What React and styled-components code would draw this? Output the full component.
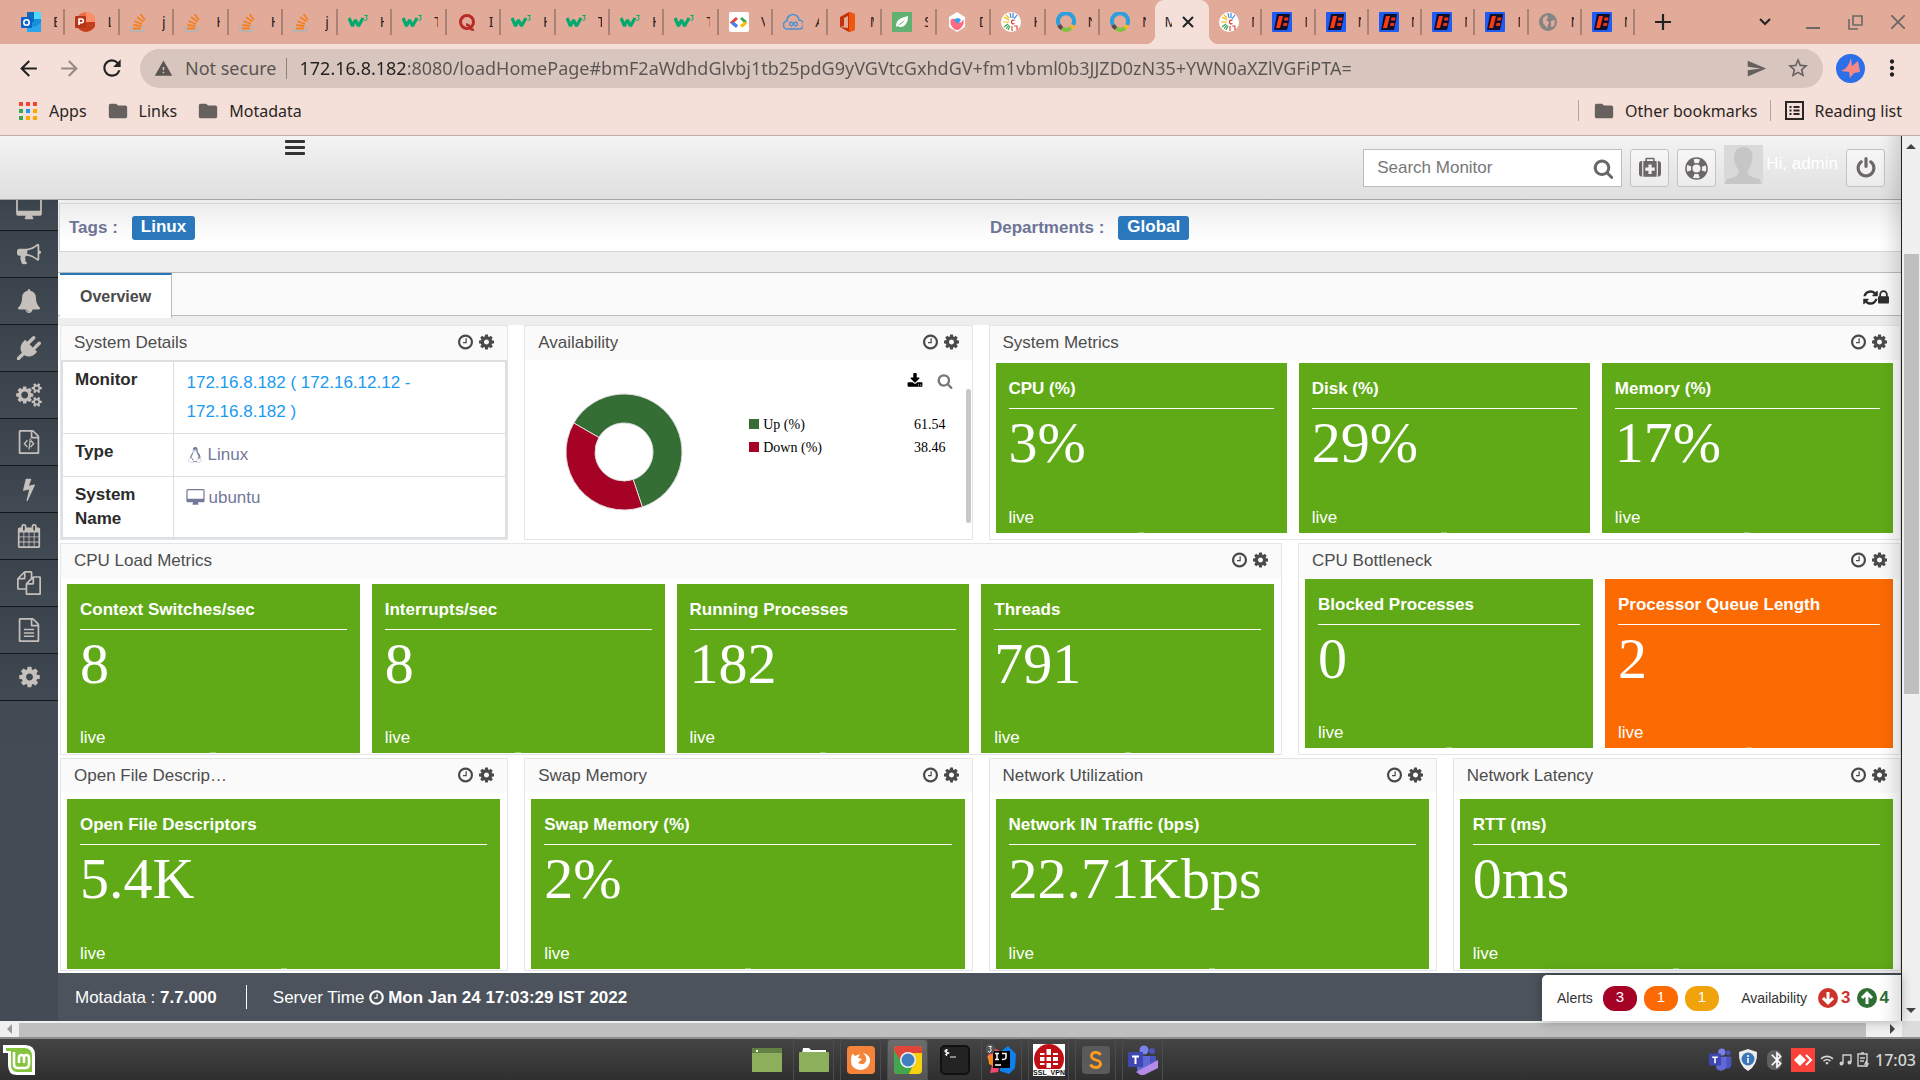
import React from "react";
import styled, { createGlobalStyle, css } from "styled-components";
import { FaLinux } from "react-icons/fa";
import { MdArrowBack, MdArrowForward, MdRefresh, MdSend, MdStarBorder, MdMoreVert, MdWarning, MdFolder, MdBluetooth, MdWifi } from "react-icons/md";

const sans = '"Liberation Sans", Arial, sans-serif';
const serif = '"Liberation Serif", "Times New Roman", serif';
const noto = '"Noto Sans", "Open Sans", sans-serif';

const Global = createGlobalStyle`
  * { box-sizing: border-box; }
  body { margin: 0; overflow: hidden; font-family: ${sans}; font-size: 17px; line-height: 24px; color: #333; }
  button { border: 0; padding: 0; margin: 0; background: none; color: inherit; font: inherit; cursor: pointer; }
  a { color: inherit; text-decoration: none; }
  svg { display: block; flex: none; }
`;

/* ---------- glyphs ---------- */

const page = "M1596 380q28 28 48 76t20 88v1152q0 40-28 68t-68 28h-1344q-40 0-68-28t-28-68v-1600q0-40 28-68t68-28h896q40 0 88 20t76 48zm-444-244v376h376q-10-29-22-41l-313-313q-12-12-41-22zm384 1528v-1024h-416q-40 0-68-28t-28-68v-416h-768v1536h1280z";
const smallCog = "v140q0 16-149 31-12 27-30 52 51 113 51 138 0 4-4 7-122 71-124 71-8 0-46-47t-52-68q-20 2-30 2t-30-2q-14 21-52 68t-46 47q-2 0-124-71-4-3-4-7 0-25 51-138-18-25-30-52-149-15-149-31v-140q0-16 149-31 13-29 30-52-51-113-51-138 0-4 4-7 4-2 35-20t59-34 30-16q8 0 46 46.500t52 67.500q20-2 30-2t30 2q51-71 92-112l6-2q4 0 124 70 4 3 4 7 0 25-51 138 17 23 30 52 149 15 149 31z";
const glyphs = {
  cog: "M1152 896q0-106-75-181t-181-75-181 75-75 181 75 181 181 75 181-75 75-181zm512-109v222q0 12-8 23t-20 13l-185 28q-19 54-39 91 35 50 107 138 10 12 10 25t-9 23q-27 37-99 108t-94 71q-12 0-26-9l-138-108q-44 23-91 38-16 136-29 186-7 28-36 28h-222q-14 0-24.500-8.500t-11.500-21.500l-28-184q-49-16-90-37l-141 107q-10 9-25 9-14 0-25-11-126-114-165-168-7-10-7-23 0-12 8-23 15-21 51-66.500t54-70.500q-27-50-41-99l-183-27q-13-2-21-12.500t-8-23.500v-222q0-12 8-23t19-13l186-28q14-46 39-92-40-57-107-138-10-12-10-24 0-10 9-23 26-36 98.500-107.500t94.500-71.500q13 0 26 10l138 107q44-23 91-38 16-136 29-186 7-28 36-28h222q14 0 24.500 8.500t11.500 21.500l28 184q49 16 90 37l142-107q9-9 24-9 13 0 25 10 129 119 165 170 7 8 7 22 0 12-8 23-15 21-51 66.500t-54 70.500q26 50 41 98l183 28q13 2 21 12.500t8 23.500z",
  clock: "M1024 544v448q0 14-9 23t-23 9h-320q-14 0-23-9t-9-23v-64q0-14 9-23t23-9h224v-352q0-14 9-23t23-9h64q14 0 23 9t9 23zm416 352q0-148-73-273t-198-198-273-73-273 73-198 198-73 273 73 273 198 198 273 73 273-73 198-198 73-273zm224 0q0 209-103 385.500t-279.500 279.500-385.500 103-385.500-103-279.500-279.500-103-385.500 103-385.500 279.500-279.500 385.500-103 385.500 103 279.500 279.500 103 385.500z",
  search: "M1216 832q0-185-131.500-316.500t-316.500-131.500-316.500 131.500-131.500 316.500 131.500 316.500 316.500 131.500 316.500-131.500 131.500-316.500zm512 832q0 52-38 90t-90 38q-54 0-90-38l-343-342q-179 124-399 124-143 0-273.500-55.500t-225-150-150-225-55.500-273.500 55.500-273.500 150-225 225-150 273.500-55.500 273.500 55.500 225 150 150 225 55.500 273.500q0 220-124 399l343 343q37 37 37 90z",
  download: "M1344 1344q0-26-19-45t-45-19-45 19-19 45 19 45 45 19 45-19 19-45zm256 0q0-26-19-45t-45-19-45 19-19 45 19 45 45 19 45-19 19-45zm128-224v320q0 40-28 68t-68 28h-1472q-40 0-68-28t-28-68v-320q0-40 28-68t68-28h465l135 136q58 56 136 56t136-56l136-136h464q40 0 68 28t28 68zm-325-569q17 41-14 70l-448 448q-18 19-45 19t-45-19l-448-448q-31-29-14-70 17-39 59-39h256v-448q0-26 19-45t45-19h256q26 0 45 19t19 45v448h256q42 0 59 39z",
  bell: "M912 1696q0-16-16-16-59 0-101.500-42.500t-42.500-101.500q0-16-16-16t-16 16q0 73 51.500 124.500t124.500 51.500q16 0 16-16zm816-288q0 52-38 90t-90 38h-448q0 106-75 181t-181 75-181-75-75-181h-448q-52 0-90-38t-38-90q50-42 91-88t85-119.500 74.500-158.500 50-206 19.500-260q0-152 117-282.500t307-158.500q-8-19-8-39 0-40 28-68t68-28 68 28 28 68q0 20-8 39 190 28 307 158.500t117 282.500q0 139 19.500 260t50 206 74.500 158.500 85 119.500 91 88z",
  bolt: "M1333 566q18 20 7 44l-540 1157q-13 25-42 25-4 0-14-2-17-5-25.500-19t-4.500-30l197-808-406 101q-4 1-12 1-18 0-31-11-18-15-13-39l201-825q4-14 16-23t28-9h328q19 0 32 12.500t13 29.500q0 8-5 18l-171 463 396-98q8-2 12-2 19 0 34 15z",
  bullhorn: "M1664 640q53 0 90.500 37.500t37.500 90.500-37.500 90.500-90.500 37.500v384q0 52-38 90t-90 38q-417-347-812-380-58 19-91 66t-31 100.500 40 92.500q-20 33-23 65.500t6 58 33.500 55 48 50 61.500 50.500q-29 58-111.500 83t-168.500 11.500-132-55.500q-7-23-29.500-87.500t-32-94.500-23-89-15-101 3.500-98.500 22-110.500h-122q-66 0-113-47t-47-113v-192q0-66 47-113t113-47h480q435 0 896-384 52 0 90 38t38 90v384zm-128 604v-954q-394 302-768 343v270q377 42 768 341z",
  desktop: "M1728 992v-832q0-13-9.500-22.500t-22.500-9.500h-1600q-13 0-22.500 9.500t-9.500 22.500v832q0 13 9.500 22.500t22.500 9.500h1600q13 0 22.500-9.500t9.500-22.500zm128-832v1088q0 66-47 113t-113 47h-544q0 37 16 77.500t32 71 16 43.500q0 26-19 45t-45 19h-512q-26 0-45-19t-19-45q0-14 16-44t32-70 16-78h-544q-66 0-113-47t-47-113v-1088q0-66 47-113t113-47h1600q66 0 113 47t47 113z",
  plug: "M1755 453q37 38 37 90.500t-37 90.500l-401 400 150 150-160 160q-163 163-389.500 186.500t-411.500-100.500l-362 362h-181v-181l362-362q-124-185-100.500-411.500t186.500-389.500l160-160 150 150 400-401q38-37 91-37t90 37 37 90.500-37 90.500l-400 401 234 234 401-400q38-37 91-37t90 37z",
  cogs: "M832 896q0-106-75-181t-181-75-181 75-75 181 75 181 181 75 181-75 75-181zm768 512q0-52-38-90t-90-38-90 38-38 90q0 53 37.500 90.500t90.500 37.500 90.500-37.500 37.500-90.500zm0-1024q0-52-38-90t-90-38-90 38-38 90q0 53 37.500 90.500t90.500 37.500 90.500-37.500 37.500-90.500zm-384 421v185q0 10-7 19.500t-16 10.500l-155 24q-11 35-32 76 34 48 90 115 7 11 7 20 0 12-7 19-23 30-82.500 89.500t-78.500 59.500q-11 0-21-7l-115-90q-37 19-77 31-11 108-23 155-7 24-30 24h-186q-11 0-20-7.500t-10-17.500l-23-153q-34-10-75-31l-118 89q-7 7-20 7-11 0-21-8-144-133-144-160 0-9 7-19 10-14 41-53t47-61q-23-44-35-82l-152-24q-10-1-17-9.500t-7-19.500v-185q0-10 7-19.500t16-10.500l155-24q11-35 32-76-34-48-90-115-7-11-7-20 0-12 7-20 22-30 82-89t79-59q11 0 21 7l115 90q34-18 77-32 11-108 23-154 7-24 30-24h186q11 0 20 7.500t10 17.500l23 153q34 10 75 31l118-89q8-7 20-7 11 0 21 8 144 133 144 160 0 8-7 19-12 16-42 54t-45 60q23 48 34 82l152 23q10 2 17 10.500t7 19.500zm640 533" + smallCog + "m0-1024" + smallCog,
  code: page + "M480 1024l260-290 80 66-200 224 200 224-80 66zM1312 1024l-260-290-80 66 200 224-200 224 80 66zM850 1440l100-800 96 14-100 800z",
  text: page + "M512 800h768v112h-768zM512 1056h768v112h-768zM512 1312h768v112h-768z",
  calendar: "M192 1664h288v-288h-288v288zm352 0h320v-288h-320v288zm-352-352h288v-320h-288v320zm352 0h320v-320h-320v320zm-352-384h288v-288h-288v288zm736 736h320v-288h-320v288zm-384-736h320v-288h-320v288zm768 736h288v-288h-288v288zm-384-352h320v-320h-320v320zm-352-864v-288q0-13-9.500-22.500t-22.500-9.500h-64q-13 0-22.500 9.500t-9.500 22.500v288q0 13 9.500 22.500t22.500 9.500h64q13 0 22.500-9.500t9.500-22.500zm736 864h288v-320h-288v320zm-384-384h320v-288h-320v288zm384 0h288v-288h-288v288zm32-480v-288q0-13-9.500-22.500t-22.500-9.500h-64q-13 0-22.500 9.500t-9.500 22.500v288q0 13 9.500 22.500t22.500 9.500h64q13 0 22.500-9.500t9.500-22.500zm384-64v1280q0 52-38 90t-90 38h-1408q-52 0-90-38t-38-90v-1280q0-52 38-90t90-38h128v-96q0-66 47-113t113-47h64q66 0 113 47t47 113v96h384v-96q0-66 47-113t113-47h64q66 0 113 47t47 113v96h128q52 0 90 38t38 90z",
  files: "M1696 384q40 0 68 28t28 68v1216q0 40-28 68t-68 28h-960q-40 0-68-28t-28-68v-288h-544q-40 0-68-28t-28-68v-672q0-40 20-88t48-76l408-408q28-28 76-48t88-20h416q40 0 68 28t28 68v328q68-40 128-40h416zm-544 213l-299 299h299v-299zm-640-384l-299 299h299v-299zm196 647l316-316v-416h-384v416q0 40-28 68t-68 28h-416v640h512v-256q0-40 20-88t48-76zm956 804v-1152h-384v416q0 40-28 68t-68 28h-416v640h896z",
  power: "M1664 896q0 156-61 298t-164 245-245 164-298 61-298-61-245-164-164-245-61-298q0-182 80.500-343t226.500-270q43-32 95.500-25t83.500 50q32 42 24.500 94.500t-49.500 84.500q-98 74-151.500 181t-53.500 228q0 104 40.500 198.500t109.500 163.500 163.500 109.500 198.500 40.500 198.500-40.500 163.500-109.500 109.500-163.500 40.500-198.500q0-121-53.500-228t-151.500-181q-42-32-49.500-84.500t24.500-94.500q31-43 84-50t95 25q146 109 226.500 270t80.500 343zm-640-768v640q0 52-38 90t-90 38-90-38-38-90v-640q0-52 38-90t90-38 90 38 38 90z",
  lock: "M640 768h512v-192q0-106-75-181t-181-75-181 75-75 181v192zm832 96v576q0 40-28 68t-68 28h-960q-40 0-68-28t-28-68v-576q0-40 28-68t68-28h32v-192q0-184 132-316t316-132 316 132 132 316v192h32q40 0 68 28t28 68z",
  refresh: "M1639 1056q0 5-1 7-64 268-268 434.500t-478 166.500q-146 0-282.500-55t-243.500-157l-129 129q-19 19-45 19t-45-19-19-45v-448q0-26 19-45t45-19h448q26 0 45 19t19 45-19 45l-137 137q71 66 161 102t187 36q134 0 250-65t186-179q11-17 53-117 8-23 30-23h192q13 0 22.500 9.500t9.500 22.500zm25-800v448q0 26-19 45t-45 19h-448q-26 0-45-19t-19-45 19-45l138-138q-148-137-349-137-134 0-250 65t-186 179q-11 17-53 117-8 23-30 23h-199q-13 0-22.500-9.500t-9.500-22.500v-7q65-268 270-434.500t480-166.500q146 0 284 55.500t245 156.500l130-129q19-19 45-19t45 19 19 45z",
  medkit: "M0 544q0-92 66-158t158-66h32v1280h-32q-92 0-158-66t-66-158zM1792 544q0-92-66-158t-158-66h-32v1280h32q92 0 158-66t66-158zM352 320h160v-160q0-40 28-68t68-28h576q40 0 68 28t28 68v160h160v1280h-1088zM640 192v128h512v-128zM1280 864h-256v-256h-256v256h-256v256h256v256h256v-256h256z",
};
/* narrow drawings: left edge and width of their own box */
const boxes = { lock: [320, 1152], clock: [128, 1536], cog: [128, 1536], refresh: [128, 1536] };

const Glyph = ({ name, size = 17 }) => {
  const [left, width] = boxes[name] || [0, 1792];
  return (
    <svg width={Math.round((size * width) / 1792)} height={size} viewBox={`${left} 0 ${width} 1792`} fill="currentColor" overflow="visible" aria-hidden="true">
      <path fillRule={name === "medkit" ? "evenodd" : "nonzero"} d={glyphs[name]} />
    </svg>
  );
};

const LifeRing = () => (
  <svg width="23" height="23" viewBox="0 0 24 24" fill="none" stroke="currentColor" aria-hidden="true">
    <circle cx="12" cy="12" r="11" strokeWidth="1.600" />
    <circle cx="12" cy="12" r="5" strokeWidth="1.600" />
    <circle cx="12" cy="12" r="8" strokeWidth="6" strokeDasharray="7 5.566" strokeDashoffset="-2.780" />
  </svg>
);

const ArrowBall = ({ up }) => (
  <svg width="20" height="20" viewBox="0 0 20 20" aria-hidden="true">
    <circle cx="10" cy="10" r="10" fill="currentColor" />
    <path d={up ? "M10 16V5M5 10l5-5 5 5" : "M10 4v11M5 10l5 5 5-5"} fill="none" stroke="#fff" strokeWidth="3" />
  </svg>
);

/* ---------- favicons ---------- */

const favs = {
  outlook: <><rect x="6" y="0" width="14" height="20" rx="1" fill="#1490df" /><path d="M6 0h7v10H6z" fill="#0f6cbd" /><path d="M13 0h7v7h-7z" fill="#50d9ff" /><path d="M6 11l7 4 7-4v9H6z" fill="#28a8ea" /><rect x="0" y="5" width="11" height="11" rx="1" fill="#0a63c9" /><circle cx="5.500" cy="10.500" r="2.700" fill="none" stroke="#fff" strokeWidth="1.600" /></>,
  ppt: <><circle cx="11" cy="10" r="10" fill="#ed6c47" /><path d="M11 0a10 10 0 0 1 10 10H11z" fill="#ff8f6b" /><path d="M2 14a10 10 0 0 0 19-4H11z" fill="#c43e1c" /><rect x="0" y="4" width="11" height="12" rx="1" fill="#b7361a" /><path d="M4 13V7h2.500a1.800 1.800 0 0 1 0 3.700H4" fill="none" stroke="#fff" strokeWidth="1.600" /></>,
  stack: <><path d="M1 14v5h12v-5" fill="none" stroke="#b8b3ae" strokeWidth="2" /><path d="M3 16.500h8M3.300 13l8 1M4.500 9.200l7.600 2.800M7 5l6.500 4.800M10.500 2l4.500 6" stroke="#f48024" strokeWidth="1.800" /></>,
  w3: <><path d="M1 6l3.500 8 3-6 3 6L15 6" fill="none" stroke="#04aa6d" strokeWidth="3.200" strokeLinejoin="bevel" /><path d="M16.500 3.500h3l-1.500 2q2 .5 1 2t-2.500.5" fill="none" stroke="#04aa6d" strokeWidth="1" /></>,
  quora: <><circle cx="10" cy="10" r="6.500" fill="none" stroke="#b92b27" strokeWidth="3" /><path d="M9 12.500q3 0 4 3t4 2" fill="none" stroke="#b92b27" strokeWidth="2.300" /></>,
  code: <><rect width="20" height="20" rx="2" fill="#fff" /><path d="M8 6l-5 4.500 5 4" fill="none" stroke="#ea4335" strokeWidth="3" /><path d="M3 10.500l5 4" stroke="#4285f4" strokeWidth="3" /><path d="M12 6l5 4.500" stroke="#34a853" strokeWidth="3" /><path d="M17 10.500l-5 4" stroke="#fbbc04" strokeWidth="3" /></>,
  cloud: <><path d="M5 17a4 4 0 0 1-1-8 6 6 0 0 1 12-1 4.500 4.500 0 0 1 0 9z" fill="none" stroke="#4a8fd8" strokeWidth="1.600" /><path d="M10.500 12q-2.500-4-4 0 1.500 4 4 0t4 0q-1.500 4-4 0" fill="none" stroke="#4a8fd8" strokeWidth="1.400" /></>,
  office: <><path d="M2 5l9-5 6 2v16l-6 2-9-5 8 1V4L6 6v8l-4 1z" fill="#c4300c" /><path d="M11 0l6 2v16l-6 2z" fill="#f0560d" /></>,
  leaf: <><rect width="20" height="20" fill="#62b072" /><path d="M4 15c0-8 5-9 12-11 0 8-4 13-11 10 3-1 6-3 8-6-3 2-6 4-9 7z" fill="#fff" /></>,
  hexagon: <><path d="M10 0l8 5v10l-8 5-8-5V5z" fill="#fff" /><path d="M3.500 8q4-3 7 1t6-2v5q-3 6-6.500 6T3.500 12z" fill="#ff6b81" /><path d="M7 8q4-4 7 0l-3 4z" fill="#36a2eb" /></>,
  rays: <><circle cx="10" cy="10" r="10" fill="#fff" /><path d="M8 8L3 5M8 10H2M8 6L5 3" stroke="#f2b705" strokeWidth="1.200" /><path d="M10 6L9 1M12 6V1M13 7l3-4" stroke="#3b82e0" strokeWidth="1.200" /><path d="M7 12l-4 3M9 14l-2 4M8 13l-3 4" stroke="#2fa84f" strokeWidth="1.200" /><path d="M11 14v5M13 14h3v4" stroke="#e54b3c" strokeWidth="1.200" fill="none" /><path d="M13.500 8.500q-3-1-3 1.500t3 1.500" stroke="#d33" strokeWidth="1.200" fill="none" /></>,
  ring: <g fill="none" strokeWidth="4"><path d="M3 13a8 8 0 1 1 14 0" stroke="#2d9fdc" /><path d="M17 13q-.500 2-2 3.500" stroke="#f5b81c" /><path d="M15 16q-4 3.500-9 .500" stroke="#7fc142" /><path d="M6 16.500Q4 15 3 13" stroke="#5a4a4a" /></g>,
  b: <><rect width="20" height="20" rx="1" fill="#1f5cf5" /><path d="M2 18L5 2h13l-1 7-2 9z" fill="#10102c" /><path d="M4 16L7 4h4L8 16z" fill="#ff3a12" /><path d="M12.500 5.500h4l-.500 3h-4zM11.500 11h4l-.500 3h-4z" fill="#f0320f" /></>,
  globe: <><circle cx="9" cy="10" r="9" fill="#858585" /><path d="M4 6l4-3 1 3-2 2 3 2-2 6-4-5zM12 9l4-1-1 6-3 1z" fill="#e2ab99" /></>,
};
const Favicon = ({ kind }) => <svg width="20" height="20" viewBox="0 0 20 20" aria-hidden="true">{favs[kind]}</svg>;

/* ---------- browser chrome ---------- */

const Desktop = styled.div`display: flex; flex-direction: column; height: 100vh; overflow: hidden; background: #fff;`;
const TabStrip = styled.div`
  display: flex; align-items: stretch; height: 44px; padding-left: 11px; background: #e2ab99; font: 14px/20px ${noto}; color: #2b211e;
`;
const TabGroup = styled.div`display: flex; flex: 0 1 ${(p) => p.$basis}px; min-width: 0;`;
const BrowserTab = styled.button`
  display: flex; align-items: center; gap: 12px; flex: 1; min-width: 0; padding: 0 0 0 10px; position: relative;
  &::after { content: ""; position: absolute; right: 0; top: 9px; width: 2px; height: 26px; background: ${(p) => (p.$bare ? "transparent" : "#a98476")}; }
  ${(p) => p.$active && css`
    gap: 10px; background: #f5e0d9; border-radius: 9px 9px 0 0;
    &::before { content: ""; position: absolute; left: -9px; right: -9px; bottom: 0; height: 9px;
      background: radial-gradient(circle at 0 0, transparent 9px, #f5e0d9 9px) left / 9px 9px no-repeat, radial-gradient(circle at 100% 0, transparent 9px, #f5e0d9 9px) right / 9px 9px no-repeat; }
  `}
`;
const TabTitle = styled.span`width: ${(p) => p.$w || 4}px; height: 20px; overflow: hidden; white-space: nowrap; text-align: left;`;
const StripButton = styled.button`display: grid; place-items: center; width: ${(p) => p.$w || 42}px;`;
const Push = styled.span`flex: 1;`;

const Toolbar = styled.div`display: flex; align-items: center; height: 48px; padding: 0 13px 0 11px; background: #f5e0d9; color: #222; font: 18px/24px ${noto};`;
const NavButton = styled.button`display: grid; place-items: center; width: ${(p) => p.$w || 42}px; height: 30px; color: ${(p) => p.$c || "#222"};`;
const Omnibox = styled.form`
  display: flex; align-items: center; flex: 1; height: 39px; margin: 0 13px 0 9px; padding: 0 4px 0 14px; border-radius: 20px; background: #d7c5be; color: #5b5552;
`;
const SiteInfo = styled.button`display: flex; align-items: center; gap: 12px; padding-right: 9px; height: 21px; border-right: 1px solid #8e827d;`;
const Address = styled.input`
  flex: 1; min-width: 0; margin-left: 13px; padding: 0; border: 0; outline: 0; font: 18px/24px ${noto}; color: #5b5552;
  background: linear-gradient(90deg, #222 108px, #5b5552 108px); background-clip: text; -webkit-background-clip: text; -webkit-text-fill-color: transparent;
`;
const Profile = styled.button`display: grid; place-items: center; width: 29px; height: 29px; margin-right: 12px; border-radius: 50%; background: #2d6fe8;`;
const Bookmarks = styled.nav`
  display: flex; align-items: center; gap: 20px; height: 44px; padding: 0 18px 6px 19px; background: #f5e0d9; border-bottom: 1px solid #bfaeae; color: #2a2524; font: 16px/22px ${noto};
`;
const Bookmark = styled.a`display: flex; align-items: center; gap: ${(p) => p.$gap || 10}px; color: inherit;`;
const BookmarkRule = styled.span`width: 1px; height: 21px; margin: 0 -6px 0 -7px; background: #b9a49d;`;

/* ---------- application ---------- */

const Viewport = styled.div`display: flex; flex: 1; min-height: 0;`;
const Site = styled.div`display: flex; flex-direction: column; flex: 1; min-width: 0; border-right: 1px solid #222; position: relative;
  &::after { content: ""; position: absolute; inset: 0 0 0 auto; width: 22px; pointer-events: none; background: linear-gradient(90deg, rgba(0,0,0,0), rgba(0,0,0,.03) 40%, rgba(0,0,0,.12)); }
`;
const Header = styled.header`
  display: flex; align-items: flex-start; height: 64px; padding: 0 16px 0 285px; background: linear-gradient(#f3f3f3, #dfdfdf); border-bottom: 1px solid #a5a5a5;
`;
const MenuButton = styled.button`
  display: flex; flex-direction: column; gap: 3px; margin-top: 4px; width: 20px;
  span { height: 3px; border-radius: 1px; background: #333; }
`;
const HeaderTools = styled.div`display: flex; gap: 8px; margin: 13px 0 0 auto; color: #6b6766;`;
const SearchBox = styled.label`display: flex; align-items: center; width: 259px; height: 38px; padding: 0 7px 0 13px; background: #fff; border: 1px solid #bdbdbd;`;
const SearchInput = styled.input`
  flex: 1; min-width: 0; padding: 0; border: 0; outline: 0; background: none; font: 17px/24px ${sans}; color: #555;
  &::placeholder { color: #777; opacity: 1; }
`;
const ToolButton = styled.button`display: grid; place-items: center; width: 39px; height: 38px; border: 1px solid #c3c3c3; border-radius: 3px; background: linear-gradient(#f6f6f6, #ececec);`;
const User = styled.a`display: flex; gap: 3px; height: 38px; margin-top: -4px; color: #fff; line-height: 38px;`;

const Main = styled.div`display: flex; flex: 1; min-height: 0;`;
const Sidebar = styled.nav`width: 58px; flex: none; background: linear-gradient(#3a434d, #424b55 50%, #444b55); overflow: hidden;`;
const SideItem = styled.a`
  display: flex; align-items: ${(p) => (p.$first ? "flex-end" : "center")}; justify-content: center; height: ${(p) => (p.$first ? 31 : 47)}px; padding-bottom: ${(p) => (p.$first ? 9 : 0)}px;
  color: #c5c0bb; background: linear-gradient(#3a424b, #424a54); border-bottom: 1px solid #15181b;
`;
const Column = styled.div`display: flex; flex-direction: column; flex: 1; min-width: 0; background: #eee;`;
const TagBar = styled.section`
  display: grid; grid-template-columns: 1fr 1fr; gap: 10px; align-items: center; height: 49px; margin: 3px 0 0 1px; padding: 1px 0 0 9px;
  border: solid #d3d6d8; border-width: 1px 0 1px 1px; background: linear-gradient(#ececec, #fafafa 26px, #fff 40px); color: #6d7496; font-weight: bold;
`;
const TagField = styled.div`display: flex; align-items: center; gap: 14px;`;
const Tag = styled.a`padding: 0 9px; border-radius: 3px; background: #2a78bb; color: #fff; line-height: 22px; height: 24px;`;
const TabBar = styled.div`
  display: flex; justify-content: space-between; align-items: flex-start; height: 44px; margin: 20px 0 9px; padding: 0 12px 0 2px; background: #fafafa; border: solid #bbb; border-width: 1px 0;
`;
const PageTab = styled.button`
  height: 45px; padding: 0 20px; background: #fff; border-top: 2px solid #2778bb; border-right: 1px solid #bbb; font-weight: bold; font-size: 16px; color: #4a4a4a;
`;
const TabActions = styled.div`display: flex; height: 44px; align-items: center; padding-top: 5px; color: #2d2d2d;`;

const Board = styled.main`
  display: grid; grid-template-columns: repeat(12, minmax(0, 1fr)); grid-template-rows: 215px 212px 213px; gap: 3px 16px; flex: 1; min-height: 0; padding: 0 0 0 2px; background: #fff; overflow: hidden;
`;
const Panel = styled.section`grid-column: span ${(p) => p.$span}; display: flex; flex-direction: column; border: 1px solid #e3e5e7; background: #fff; min-width: 0;`;
const PanelHead = styled.header`display: flex; align-items: center; justify-content: space-between; flex: none; height: 34px; padding: 0 13px; background: #fafafa; color: #4d4d4d;`;
const PanelTitle = styled.h2`margin: 0; font-size: 17px; font-weight: normal; line-height: 24px; max-width: 156px; overflow: hidden; text-overflow: ellipsis; white-space: nowrap;`;
const PanelActions = styled.div`display: flex; gap: 6px; padding-bottom: 2px; color: #4a4a4a;`;
const Tiles = styled.div`display: flex; gap: 12px; flex: 1; padding: ${(p) => p.$top}px 7px ${(p) => p.$bottom}px 6px;`;
const Tile = styled.article`
  display: flex; flex-direction: column; flex: 1; padding: 14px 13px 3px; color: #fff;
  background: linear-gradient(rgba(255,255,255,.35), rgba(255,255,255,.35)) center bottom / 6px 1px no-repeat ${(p) => p.$color || "#60aa17"};
`;
const TileTitle = styled.h3`margin: 0; padding-bottom: 7px; border-bottom: 1px solid #fff; font-size: 17px; line-height: 24px; white-space: nowrap;`;
const TileValue = styled.strong`margin-top: 2px; font: normal 58px/64px ${serif};`;
const TileNote = styled.span`margin-top: auto;`;

const Details = styled.table`
  width: 100%; border-collapse: collapse; border: 2px solid #dce0e3;
  th, td { border: 1px solid #dce0e3; vertical-align: top; text-align: left; }
  th { width: 111px; padding: 6px 12px; color: #2b2b2b; }
  td { padding: 6px 13px 7px; line-height: 29px; color: #74799a; }
`;
const CellFlow = styled.span`display: flex; align-items: center; gap: 5px;`;
const Link = styled.a`color: #1a9af0;`;

const Uptime = styled.div`display: flex; flex: 1; padding: 13px 1px 0 40px;`;
const DonutBox = styled.div`padding-top: 20px;`;
const UptimeSide = styled.div`flex: 1; margin-left: 66px; display: flex; flex-direction: column; gap: 24px;`;
const UptimeTools = styled.div`display: flex; justify-content: flex-end; gap: 14px; padding-right: 13px; button:last-child { color: #777; } color: #000;`;
const Legend = styled.table`
  width: calc(100% - 20px); border-collapse: collapse; font: 14px/23px ${serif}; color: #000;
  td { padding: 0; text-align: right; } th { padding: 0; text-align: left; font-weight: normal; }
`;
const Key = styled.span`display: inline-block; width: 10px; height: 10px; margin-right: 4px; background: ${(p) => p.$color};`;
const Thumb = styled.span`width: 5px; height: 134px; margin-top: 16px; border-radius: 3px; background: #c8c8c8;`;

const Footer = styled.footer`display: flex; align-items: center; height: 48px; flex: none; padding-left: 17px; background: #4c535c; color: #fff;`;
const FootItem = styled.span`display: flex; align-items: center; white-space: pre; padding-top: 1px; svg { margin-right: 4px; }`;
const FootRule = styled.span`width: 1px; height: 24px; margin: 0 26px 0 29px; background: #fff;`;
const Status = styled.div`
  display: flex; align-items: center; align-self: flex-end; height: 46px; width: 359px; margin-left: auto; padding: 0 6px 0 15px; border-radius: 5px 0 0 0; background: #fff; color: #333; font-size: 14px; box-shadow: 0 0 12px rgba(0,0,0,.3);
`;
const Pill = styled.a`width: 34px; height: 25px; margin-right: 7px; border-radius: 12px; background: ${(p) => p.$color}; color: #fff; text-align: center; font-size: 15px; line-height: 22px;`;
const StatusLabel = styled.span`margin-right: ${(p) => p.$gap}px;`;
const Count = styled.a`display: flex; align-items: center; gap: 3px; margin-right: 6px; font-weight: bold; font-size: 17px; color: ${(p) => p.$color};`;

const VBar = styled.div`display: flex; flex-direction: column; align-items: center; width: 18px; background: #f0f0f0; padding: 8px 0 8px;`;
const VThumb = styled.span`width: 15px; height: 440px; margin-top: 105px; background: #bfbfbf;`;
const HBar = styled.div`display: flex; align-items: center; height: 18px; flex: none; padding-left: 7px; background: #f0f0f0; border-bottom: 2px solid #8d8d8d;`;
const HThumb = styled.span`flex: 1; height: 14px; margin: 1px 24px 0 7px; background: #bfbfbf;`;
const Corner = styled.span`width: 18px; height: 16px; margin-left: 7px; background: #dcdcdc;`;
const Arrow = styled.span`
  width: 0; height: 0; border: 5px solid transparent;
  ${(p) => p.$dir === "up" && css`border-top: 0; border-bottom-color: #444;`}
  ${(p) => p.$dir === "down" && css`border-bottom: 0; border-top-color: #444; margin-top: auto;`}
  ${(p) => p.$dir === "left" && css`border-left: 0; border-right-color: #999;`}
  ${(p) => p.$dir === "right" && css`border-right: 0; border-left-color: #444;`}
`;

/* ---------- desktop panel ---------- */

const Taskbar = styled.footer`display: flex; align-items: stretch; height: 41px; flex: none; padding: 0 4px 0 3px; background: linear-gradient(#444, #2f2f2f);`;
const Launchers = styled.div`display: flex; gap: 6px; margin-left: 711px;`;
const Launcher = styled.button`
  display: grid; place-items: center; width: 41px; border-radius: 4px 4px 0 0; border: ${(p) => (p.$plain ? "0" : "1px solid #4c4c4c")}; border-bottom: 0; background: ${(p) => (p.$on ? "linear-gradient(#6c6c6c, #555)" : "none")};
`;
const Tray = styled.div`display: flex; align-items: center; gap: 5px; margin-left: auto; color: #d6d6d6; font: 500 16px/24px ${noto};`;
const Oval = styled.span`display: grid; place-items: center; width: 15px; height: 20px; margin: 0 4px; border-radius: 7px; background: #606060;`;

const tabsLeft = [["outlook", "E"], ["ppt", "L"], ["stack", "j"], ["stack", "H"], ["stack", "H"], ["stack", "j"], ["w3", "H"], ["w3", "T"], ["quora", "I"], ["w3", "H"], ["w3", "T"], ["w3", "H"], ["w3", "T"], ["code", "V"], ["cloud", "A"], ["office", "M"], ["leaf", "S"], ["hexagon", "D"], ["rays", "H"], ["ring", "N"], ["ring", "N"]];
const tabsRight = ["rays", "b", "b", "b", "b", "b", "globe", "b"];
const sideItems = [["desktop", "Monitors"], ["bullhorn", "Announcements"], ["bell", "Alerts"], ["plug", "Plugins"], ["cogs", "Services"], ["code", "Scripts"], ["bolt", "Actions"], ["calendar", "Schedule"], ["files", "Templates"], ["text", "Reports"], ["cog", "Settings"]];

const BrowserTop = () => (
  <>
    <TabStrip>
      <TabGroup $basis={1198}>
        {tabsLeft.map(([kind, t], i) => (
          <BrowserTab key={i} $bare={i === 20}><Favicon kind={kind} /><TabTitle>{t}</TabTitle></BrowserTab>
        ))}
        <BrowserTab $active $bare>
          <TabTitle $w={7}>M</TabTitle>
          <svg width="12" height="12" viewBox="0 0 12 12" stroke="#222" strokeWidth="2"><path d="M1 1l10 10M11 1L1 11" /></svg>
        </BrowserTab>
      </TabGroup>
      <TabGroup $basis={426}>
        {tabsRight.map((kind, i) => (
          <BrowserTab key={i}><Favicon kind={kind} /><TabTitle $w={3}>N</TabTitle></BrowserTab>
        ))}
      </TabGroup>
      <StripButton $w={56} aria-label="New tab"><svg width="16" height="16" viewBox="0 0 16 16" stroke="#222" strokeWidth="2.200"><path d="M8 0v16M0 8h16" /></svg></StripButton>
      <Push />
      <StripButton $w={54} aria-label="Search tabs"><svg width="12" height="8" viewBox="0 0 12 8" fill="none" stroke="#222" strokeWidth="2"><path d="M1 1l5 5 5-5" /></svg></StripButton>
      <StripButton aria-label="Minimise"><svg width="14" height="24" viewBox="0 0 14 24"><path d="M0 17h14v2H0z" fill="#6b6766" /></svg></StripButton>
      <StripButton aria-label="Restore"><svg width="15" height="15" viewBox="0 0 15 15" fill="none" stroke="#6b6766" strokeWidth="1.600"><path d="M5 1h9v9H5zM1 4v10h9" /></svg></StripButton>
      <StripButton $w={44} aria-label="Close"><svg width="14" height="14" viewBox="0 0 14 14" stroke="#6b6766" strokeWidth="1.800"><path d="M0 0l14 14M14 0L0 14" /></svg></StripButton>
    </TabStrip>
    <Toolbar>
      <NavButton $w={34} aria-label="Back"><MdArrowBack size={25} /></NavButton>
      <NavButton $w={48} $c="#968984" aria-label="Forward"><MdArrowForward size={25} /></NavButton>
      <NavButton $w={38} aria-label="Reload"><MdRefresh size={26} /></NavButton>
      <Omnibox>
        <SiteInfo type="button"><MdWarning size={19} />Not secure</SiteInfo>
        <Address aria-label="Address" readOnly value="172.16.8.182:8080/loadHomePage#bmF2aWdhdGlvbj1tb25pdG9yVGVtcGxhdGV+fm1vbml0b3JJZD0zN35+YWN0aXZlVGFiPTA=" />
        <NavButton type="button" $c="#66615f" aria-label="Send"><MdSend size={21} /></NavButton>
        <NavButton type="button" $c="#66615f" aria-label="Bookmark"><MdStarBorder size={24} /></NavButton>
      </Omnibox>
      <Profile aria-label="Profile"><svg width="20" height="20" viewBox="0 0 20 20"><path d="M0 13Q7 11 10 0l1 8 6-5 2 11-6 1-4 5-1-6z" fill="#f58a86" /></svg></Profile>
      <NavButton $w={30} aria-label="Menu"><MdMoreVert size={26} /></NavButton>
    </Toolbar>
    <Bookmarks>
      <Bookmark href="#apps" $gap={12}>
        <svg width="18" height="18" viewBox="0 0 18 18">
          {["#f44336", "#f44336", "#f44336", "#34a853", "#2196f3", "#fbab00", "#34a853", "#fbab00", "#fbab00"].map((c, i) => <rect key={i} x={(i % 3) * 7} y={Math.floor(i / 3) * 7} width="4" height="4" fill={c} />)}
        </svg>Apps
      </Bookmark>
      <Bookmark href="#links"><MdFolder size={22} color="#66605e" />Links</Bookmark>
      <Bookmark href="#motadata"><MdFolder size={22} color="#66605e" />Motadata</Bookmark>
      <Push />
      <BookmarkRule />
      <Bookmark href="#other"><MdFolder size={22} color="#66605e" />Other bookmarks</Bookmark>
      <BookmarkRule />
      <Bookmark href="#reading"><svg width="19" height="19" viewBox="0 0 19 19" fill="none" stroke="#2a2524" strokeWidth="2"><path d="M1 1h17v17H1zM4.500 6h2M4.500 9.500h2M4.500 13h2M8.500 6h6M8.500 9.500h6M8.500 13h6" /></svg>Reading list</Bookmark>
    </Bookmarks>
  </>
);

const PanelFrame = ({ title, span, children }) => (
  <Panel $span={span}>
    <PanelHead>
      <PanelTitle>{title}</PanelTitle>
      <PanelActions>
        <button aria-label={`${title} time range`}><Glyph name="clock" size={18} /></button>
        <button aria-label={`${title} settings`}><Glyph name="cog" size={18} /></button>
      </PanelActions>
    </PanelHead>
    {children}
  </Panel>
);

const Metrics = ({ title, span, top, bottom, items }) => (
  <PanelFrame title={title} span={span}>
    <Tiles $top={top} $bottom={bottom}>
      {items.map(([name, value, color]) => (
        <Tile key={name} $color={color}>
          <TileTitle>{name}</TileTitle>
          <TileValue>{value}</TileValue>
          <TileNote>live</TileNote>
        </Tile>
      ))}
    </Tiles>
  </PanelFrame>
);

const arc = (a0, a1) => {
  const pt = (r, a) => `${60 + r * Math.cos(a)} ${60 + r * Math.sin(a)}`;
  const large = a1 - a0 > Math.PI ? 1 : 0;
  return `M${pt(58, a0)}A58 58 0 ${large} 1 ${pt(58, a1)}L${pt(29, a1)}A29 29 0 ${large} 0 ${pt(29, a0)}Z`;
};
const split = (-150 * Math.PI) / 180;
const upEnd = split + 0.6154 * 2 * Math.PI;

const Availability = () => (
  <PanelFrame title="Availability" span={3}>
    <Uptime>
      <DonutBox>
        <svg width="118" height="118" viewBox="1 1 118 118" stroke="#ddd" strokeWidth="1">
          <path d={arc(split, upEnd)} fill="#356e35" />
          <path d={arc(upEnd, split + 2 * Math.PI)} fill="#a50226" />
        </svg>
      </DonutBox>
      <UptimeSide>
        <UptimeTools>
          <button aria-label="Download"><Glyph name="download" size={16} /></button>
          <button aria-label="Zoom"><Glyph name="search" size={16} /></button>
        </UptimeTools>
        <Legend>
          <tbody>
            <tr><th scope="row"><Key $color="#356e35" />Up (%)</th><td>61.54</td></tr>
            <tr><th scope="row"><Key $color="#a50226" />Down (%)</th><td>38.46</td></tr>
          </tbody>
        </Legend>
      </UptimeSide>
      <Thumb />
    </Uptime>
  </PanelFrame>
);

const TeamsMark = ({ size, ribbon }) => (
  <svg width={size} height={size} viewBox="0 0 30 30">
    <circle cx="24" cy="6" r="3" fill="#4b53bc" /><path d="M18 11h10v8a5 5 0 0 1-10 3z" fill="#4b53bc" />
    <circle cx="16" cy="5" r="4.500" fill="#7b83eb" /><path d="M9 11h13v11a7 7 0 0 1-13 3z" fill="#6068d8" />
    <rect x="0" y="7" width="15" height="15" rx="1" fill="#3f48b0" /><path d="M4 11.500h7M7.500 11.500V19" stroke="#fff" strokeWidth="2" />
    {ribbon && <path d="M8 27L30 15v8L14 31z" fill="#b58be8" />}
  </svg>
);

const launchers = [
  { name: "Show desktop", plain: true, art: <svg width="30" height="24" viewBox="0 0 30 24"><path d="M0 0h30v24H0z" fill="#8caf5c" /><path d="M0 0h30v5H0z" fill="#628244" /><path d="M4 2h2v2H4z" fill="#fff" /></svg> },
  { name: "Files", art: <svg width="30" height="24" viewBox="0 0 30 24"><path d="M4 0h6l2 2h15v4H3z" fill="#fff" /><rect y="4" width="30" height="20" rx="1" fill="#8caf5c" /></svg> },
  { name: "Firefox", art: <svg width="28" height="28" viewBox="0 0 28 28"><rect width="28" height="28" rx="4" fill="#f5843a" /><path d="M5 8q2 0 3 2l5-2-2 4 4 1-4 4q6 3 8-2 1-5-3-8 8 2 7 9-2 8-10 8-9-1-9-9 0-4 1-7z" fill="#fff" /></svg> },
  { name: "Chrome", on: true, art: <svg width="28" height="28" viewBox="0 0 28 28"><rect width="28" height="28" rx="4" fill="#f8d012" /><path d="M0 3L11 20l8-1-4 9H4a4 4 0 0 1-4-4z" fill="#43a64c" /><path d="M4 0h20a4 4 0 0 1 4 4v3H14L6 14 0 4q0-4 4-4z" fill="#e0453a" /><circle cx="14" cy="14" r="8" fill="#f1f1f1" /><circle cx="14" cy="14" r="6.500" fill="#3f7fc0" /></svg> },
  { name: "Terminal", plain: true, art: <svg width="30" height="30" viewBox="0 0 30 30"><rect x="1" y="1" width="28" height="28" rx="4" fill="#232323" stroke="#111" strokeWidth="2" /><path d="M8 5q-3-.500-3 1t3 1.500-3 2M6.500 4v7M10 12h6" fill="none" stroke="#eee" strokeWidth="1.200" /></svg> },
  { name: "IntelliJ IDEA", art: <svg width="32" height="32" viewBox="0 0 32 32"><path d="M6 3l10 5-4 20-8 1 2-8-5-8z" fill="#f0476f" /><path d="M2 12l5-2v12l-4-2z" fill="#fa8a1e" /><path d="M22 2l8 8-1 14-6 6-9-3V8z" fill="#0f80f0" /><rect x="7" y="7" width="17" height="17" fill="#000" /><path d="M9 9.500h4M11 9.500v6M9 15.500h4M16 9.500h4v4q0 2-4 2M9 21h6" fill="none" stroke="#fff" strokeWidth="1.500" /><circle cx="4" cy="5" r="5" fill="#555" /><path d="M2.500 2.500h3l-1.500 2q2 .500 1 2.500t-3 .500" fill="none" stroke="#eee" /></svg> },
  { name: "SSL VPN", art: <svg width="32" height="32" viewBox="0 0 32 32"><path d="M0 0h32v32H0z" fill="#fff" /><circle cx="16" cy="15" r="15" fill="#c00f14" /><path d="M7 9h5v-4h8v4h5v12h-5v3h-8v-3H7z" fill="#fff" /><path d="M6 12h20M6 18h20M12.500 5v20M19 5v20" stroke="#c00f14" strokeWidth="2" /><path d="M0 25h32v7H0z" fill="#fff" /><text x="16" y="31" textAnchor="middle" fontFamily="Liberation Sans" fontSize="7" fontWeight="bold" fill="#111">[SSL_VPN]</text></svg> },
  { name: "Sublime Text", art: <svg width="28" height="28" viewBox="0 0 28 28"><rect width="28" height="28" rx="4" fill="#5a5a5a" /><path d="M18.500 9q-2-3-5.500-2.500-4 .500-3.500 4 .500 2.500 4.500 3.500 5 1 4.500 4.500-1 3-4.500 3-4 0-5.500-3" fill="none" stroke="#ff9d1e" strokeWidth="2.800" /></svg> },
  { name: "Teams", art: <TeamsMark size={30} ribbon /> },
];

export default function App() {
  return (
    <Desktop>
      <Global />
      <BrowserTop />
      <Viewport>
        <Site>
          <Header>
            <MenuButton aria-label="Toggle menu"><span /><span /><span /></MenuButton>
            <HeaderTools>
              <SearchBox><SearchInput type="search" placeholder="Search Monitor" aria-label="Search Monitor" /><Glyph name="search" size={21} /></SearchBox>
              <ToolButton aria-label="Health kit"><Glyph name="medkit" size={22} /></ToolButton>
              <ToolButton aria-label="Support"><LifeRing /></ToolButton>
              <User href="#profile">
                <svg width="39" height="39" viewBox="0 0 39 39"><path d="M0 0h39v39H0z" fill="#d9d9d9" /><path d="M19.500 2c6 0 9 4 9 10s-3 11-5 14c0 5 6 7 12 8l2 5H1l2-5c6-1 12-3 12-8-2-3-5-8-5-14S14 2 19.500 2z" fill="#c6c6c6" /></svg>
                Hi, admin
              </User>
              <ToolButton aria-label="Log out"><Glyph name="power" size={22} /></ToolButton>
            </HeaderTools>
          </Header>
          <Main>
            <Sidebar>
              {sideItems.map(([icon, label], i) => (
                <SideItem key={label} href={`#${icon}`} aria-label={label} $first={i === 0}><Glyph name={icon} size={24} /></SideItem>
              ))}
            </Sidebar>
            <Column>
              <TagBar>
                <TagField>Tags : <Tag href="#linux">Linux</Tag></TagField>
                <TagField>Departments : <Tag href="#global">Global</Tag></TagField>
              </TagBar>
              <TabBar>
                <PageTab>Overview</PageTab>
                <TabActions>
                  <button aria-label="Refresh"><Glyph name="refresh" size={17} /></button>
                  <button aria-label="Lock layout"><Glyph name="lock" size={17} /></button>
                </TabActions>
              </TabBar>
              <Board>
                <PanelFrame title="System Details" span={3}>
                  <Details>
                    <tbody>
                      <tr><th scope="row">Monitor</th><td><Link href="#monitor">172.16.8.182 ( 172.16.12.12 - 172.16.8.182 )</Link></td></tr>
                      <tr><th scope="row">Type</th><td><CellFlow><FaLinux size={16} />Linux</CellFlow></td></tr>
                      <tr><th scope="row">System Name</th><td><CellFlow><Glyph name="desktop" size={17} />ubuntu</CellFlow></td></tr>
                    </tbody>
                  </Details>
                </PanelFrame>
                <Availability />
                <Metrics title="System Metrics" span={6} top={3} bottom={6} items={[["CPU (%)", "3%"], ["Disk (%)", "29%"], ["Memory (%)", "17%"]]} />
                <Metrics title="CPU Load Metrics" span={8} top={6} bottom={1} items={[["Context Switches/sec", "8"], ["Interrupts/sec", "8"], ["Running Processes", "182"], ["Threads", "791"]]} />
                <Metrics title="CPU Bottleneck" span={4} top={1} bottom={6} items={[["Blocked Processes", "0"], ["Processor Queue Length", "2", "#fc6a03"]]} />
                <Metrics title="Open File Descriptors" span={3} top={6} bottom={1} items={[["Open File Descriptors", "5.4K"]]} />
                <Metrics title="Swap Memory" span={3} top={6} bottom={1} items={[["Swap Memory (%)", "2%"]]} />
                <Metrics title="Network Utilization" span={3} top={6} bottom={1} items={[["Network IN Traffic (bps)", "22.71Kbps"]]} />
                <Metrics title="Network Latency" span={3} top={6} bottom={1} items={[["RTT (ms)", "0ms"]]} />
              </Board>
              <Footer>
                <FootItem>Motadata : <b>7.7.000</b></FootItem>
                <FootRule />
                <FootItem>Server Time <Glyph name="clock" size={17} /><b>Mon Jan 24 17:03:29 IST 2022</b></FootItem>
                <Status>
                  <StatusLabel $gap={10}>Alerts</StatusLabel>
                  <Pill href="#critical" $color="#a50226">3</Pill>
                  <Pill href="#major" $color="#fc6a03">1</Pill>
                  <Pill href="#minor" $color="#f0a30a">1</Pill>
                  <Push />
                  <StatusLabel $gap={11}>Availability</StatusLabel>
                  <Count href="#down" $color="#cc332b"><ArrowBall />3</Count>
                  <Count href="#up" $color="#2f6f35"><ArrowBall up />4</Count>
                </Status>
              </Footer>
            </Column>
          </Main>
        </Site>
        <VBar><Arrow $dir="up" /><VThumb /><Arrow $dir="down" /></VBar>
      </Viewport>
      <HBar><Arrow $dir="left" /><HThumb /><Arrow $dir="right" /><Corner /></HBar>
      <Taskbar>
        <button aria-label="Menu">
          <svg width="32" height="30" viewBox="0 0 32 30"><path d="M0 0h22q10 0 10 10v20H14Q5 30 5 20V8H0z" fill="#fff" /><path d="M3 3h18q8 0 8 8v16H14q-6 0-6-7V6H3z" fill="#86c440" /><path d="M11 7v12q0 4 4 4h7q4 0 4-4v-6q0-3-2.500-3T21 13v5M21 13q0-3-2.500-3T16 13v5" fill="none" stroke="#fff" strokeWidth="2.600" /></svg>
        </button>
        <Launchers>
          {launchers.map((l) => <Launcher key={l.name} aria-label={l.name} $plain={l.plain} $on={l.on}>{l.art}</Launcher>)}
        </Launchers>
        <Tray>
          <TeamsMark size={24} />
          <svg width="20" height="22" viewBox="0 0 20 22"><path d="M10 0l9 3q1 13-9 19Q0 16 1 3z" fill="#eee" /><circle cx="10" cy="10" r="6.500" fill="#3b77b8" /><path d="M10 9v5M10 6v2" stroke="#fff" strokeWidth="1.600" /></svg>
          <Oval><MdBluetooth size={20} color="#fff" /></Oval>
          <svg width="24" height="24" viewBox="0 0 24 24"><path d="M0 0h24v24H0z" fill="#f8423a" /><path d="M9 6l6 6-6 6-6-6z" fill="#fff" /><path d="M13 7l5 5-5 5" transform="translate(2 0)" fill="none" stroke="#fff" strokeWidth="2" /></svg>
          <MdWifi size={14} />
          <svg width="13" height="13" viewBox="0 0 13 13"><path d="M4 10V2h8v7" fill="none" stroke="#cfcfcf" strokeWidth="1.400" /><circle cx="2.500" cy="10.500" r="2" fill="#cfcfcf" /><circle cx="10.500" cy="9.500" r="2" fill="#cfcfcf" /></svg>
          <svg width="13" height="15" viewBox="0 0 13 15" fill="none" stroke="#cfcfcf" strokeWidth="1.400"><path d="M1 2h9v12H1zM4 1h3M3 6h5M3 9h4M10 8l-2 4h3l-2 3" /></svg>
          17:03
        </Tray>
      </Taskbar>
    </Desktop>
  );
}
